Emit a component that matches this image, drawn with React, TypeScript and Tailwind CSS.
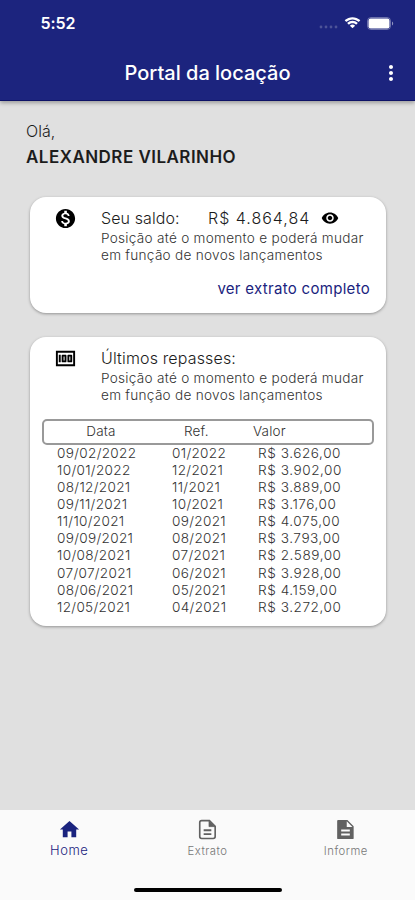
import type { ReactNode } from 'react';
import { MdHome, MdMoney, MdMonetizationOn, MdMoreVert, MdVisibility } from 'react-icons/md';

const repasses = [
  { data: '09/02/2022', ref: '01/2022', valor: 'R$ 3.626,00' },
  { data: '10/01/2022', ref: '12/2021', valor: 'R$ 3.902,00' },
  { data: '08/12/2021', ref: '11/2021', valor: 'R$ 3.889,00' },
  { data: '09/11/2021', ref: '10/2021', valor: 'R$ 3.176,00' },
  { data: '11/10/2021', ref: '09/2021', valor: 'R$ 4.075,00' },
  { data: '09/09/2021', ref: '08/2021', valor: 'R$ 3.793,00' },
  { data: '10/08/2021', ref: '07/2021', valor: 'R$ 2.589,00' },
  { data: '07/07/2021', ref: '06/2021', valor: 'R$ 3.928,00' },
  { data: '08/06/2021', ref: '05/2021', valor: 'R$ 4.159,00' },
  { data: '12/05/2021', ref: '04/2021', valor: 'R$ 3.272,00' },
];

function StatusBar() {
  return (
    <div className="flex h-[46px] items-center pl-[40.5px] pr-[21px]">
      <span className="text-[16px] font-semibold leading-none tracking-[-0.1px]">5:52</span>
      <div className="ml-auto flex items-center">
        <svg viewBox="0 0 19 4" className="mt-2 h-1 w-[19px]" fill="#4d5398">
          <circle cx="2" cy="2" r="1.4" />
          <circle cx="7" cy="2" r="1.4" />
          <circle cx="12" cy="2" r="1.4" />
          <circle cx="17" cy="2" r="1.4" />
        </svg>
        <svg viewBox="0 0 17 12" className="ml-[6px] h-3 w-[17px]" fill="white">
          <path d="M8.5 2.4c2.3 0 4.4.9 6 2.4.1.1.3.1.4 0l1.2-1.2c.1-.1.1-.3 0-.5C12-.8 5-.8.9 3.1c-.1.2-.1.4 0 .5l1.2 1.2c.1.1.3.1.4 0C4.1 3.3 6.2 2.4 8.5 2.4z" />
          <path d="M8.5 6.2c1.3 0 2.5.5 3.4 1.3.1.1.3.1.5 0l1.2-1.2c.1-.1.1-.3 0-.5a7.5 7.5 0 0 0-10.2 0c-.1.2-.1.4 0 .5l1.2 1.2c.2.1.4.1.5 0 .9-.8 2.1-1.3 3.4-1.3z" />
          <path d="M10.9 8.9c.1-.1.1-.3 0-.4a3.7 3.7 0 0 0-4.8 0c-.1.1-.1.3 0 .4l2.2 2.2c.1.1.3.1.4 0z" />
        </svg>
        <svg viewBox="0 0 27 13" className="ml-[6px] h-[13px] w-[27px]">
          <rect x=".5" y=".5" width="23" height="12" rx="3.5" fill="none" stroke="white" strokeOpacity=".35" />
          <rect x="1.5" y="1.5" width="21" height="10" rx="2.2" fill="white" />
          <path d="M25 4.5c1.6.6 1.6 3.4 0 4z" fill="white" fillOpacity=".5" />
        </svg>
      </div>
    </div>
  );
}

function Card({ className, children }: { className: string; children: ReactNode }) {
  return (
    <section className={`ml-[29.5px] mr-[29px] rounded-[16px] bg-white shadow-[0_1px_3px_rgba(0,0,0,0.35)] ${className}`}>
      {children}
    </section>
  );
}

function Aviso() {
  return (
    <p className="whitespace-nowrap text-[13.6px] font-light leading-[17px] tracking-[0.27px] text-[#333]">
      Posição até o momento e poderá mudar
      <br />
      em função de novos lançamentos
    </p>
  );
}

function PageOutlineIcon() {
  return (
    <svg viewBox="0 0 24 24" className="size-[23px]" fill="none" stroke="currentColor" strokeWidth="1.7">
      <path d="M14 2.800H5.900a2 2 0 0 0-2 2v14.600a2 2 0 0 0 2 2H18a2 2 0 0 0 2-2V8.800z" />
      <path d="M13.500 3v6h6.200z" fill="currentColor" strokeWidth=".6" />
      <path d="M8 12.700h8M8 16.800h8" strokeWidth="2" />
    </svg>
  );
}

function PageIcon() {
  return (
    <svg viewBox="0 0 24 24" className="size-[23px]" fill="currentColor">
      <path
        fillRule="evenodd"
        d="M4.300 2H14l6.500 6.500v13a.5.500 0 0 1-.5.500H4.300a1 1 0 0 1-1-1V3a1 1 0 0 1 1-1zM13.300 3.500V9.300h5.900zM7.500 12v2h9v-2zM7.500 16.200v2h9v-2z"
      />
    </svg>
  );
}

function NavItem({ icon, label, active }: { icon: ReactNode; label: string; active?: boolean }) {
  return (
    <div className={active ? 'flex flex-1 flex-col items-center text-[#1a237e]' : 'flex flex-1 flex-col items-center text-[#616161]'}>
      {icon}
      <span
        className={
          active
            ? 'mt-px text-[13px] font-light leading-[17px] tracking-[0.55px]'
            : 'mt-[2px] text-[11.3px] font-light leading-[17px] tracking-[0.5px] text-[#777]'
        }
      >
        {label}
      </span>
    </div>
  );
}

export default function App() {
  return (
    <div className="flex h-[900px] w-[415px] flex-col bg-[#e0e0e0] font-['Inter','Liberation_Sans',sans-serif] text-[#1c1c1c]">
      <header className="h-[101px] shrink-0 border-b border-[#0d1266] bg-[#1c247e] text-white shadow-[0_2px_4px_rgba(0,0,0,0.3)]">
        <StatusBar />
        <div className="grid grid-cols-[40px_1fr_40px] items-center pt-[11px]">
          <span />
          <h1 className="whitespace-nowrap text-center text-[20px] font-medium leading-8">Portal da locação</h1>
          <MdMoreVert className="ml-1 size-6" />
        </div>
      </header>

      <main className="flex-1">
        <div className="px-[26px] pt-[19px]">
          <p className="text-[16px] font-light leading-[22px]">Olá,</p>
          <p className="mt-[4px] text-[17px] font-semibold leading-[22px] tracking-[0.47px]">ALEXANDRE VILARINHO</p>
        </div>

        <Card className="mt-[28.5px] flex h-[116.5px] pl-[24px] pt-[10px]">
          <MdMonetizationOn className="size-[23px] shrink-0 text-black" />
          <div className="ml-[24.5px] flex-1">
            <div className="flex h-[23px] items-center whitespace-nowrap text-[16px] font-light">
              <span className="w-[107px] tracking-[0.1px]">Seu saldo:</span>
              <span className="w-[113px] tracking-[1px]">R$ 4.864,84</span>
              <MdVisibility className="size-[18px] text-black" />
            </div>
            <Aviso />
            <p className="mr-[16px] mt-[15px] whitespace-nowrap text-right text-[15px] leading-[20px] tracking-[0.3px] text-[#1a237e]">
              ver extrato completo
            </p>
          </div>
        </Card>

        <Card className="mt-[23.5px] h-[289.5px] pt-[10px]">
          <div className="flex pl-[24px]">
            <MdMoney className="size-[23px] shrink-0 text-black" />
            <div className="ml-[24.5px]">
              <h2 className="h-[23px] text-[16px] font-light leading-[23px] tracking-[0.15px]">Últimos repasses:</h2>
              <Aviso />
            </div>
          </div>
          <div className="ml-[12.5px] mt-[15px] flex h-[26px] w-[332px] items-center rounded-[5px] border-2 border-[#999] text-[13.5px] font-light tracking-[0.2px] text-[#333]">
            <span className="w-[114px] text-center">Data</span>
            <span className="ml-[26px] w-[69px]">Ref.</span>
            <span>Valor</span>
          </div>
          {repasses.map((r) => (
            <div
              key={r.data}
              className="flex h-[17.1px] items-center whitespace-nowrap pl-[27.5px] text-[13.6px] font-light text-[#333]"
            >
              <span className="w-[115px] tracking-[0.32px]">{r.data}</span>
              <span className="w-[86px] tracking-[0.32px]">{r.ref}</span>
              <span className="tracking-[0.55px]">{r.valor}</span>
            </div>
          ))}
        </Card>
      </main>

      <nav className="flex h-[90px] shrink-0 flex-col bg-[#fafafa]">
        <div className="flex pt-[8px]">
          <NavItem active label="Home" icon={<MdHome className="size-[23px]" />} />
          <NavItem label="Extrato" icon={<PageOutlineIcon />} />
          <NavItem label="Informe" icon={<PageIcon />} />
        </div>
        {/* home indicator */}
        <div className="mb-[8px] mt-auto h-[4px] w-[148px] self-center rounded-full bg-black" />
      </nav>
    </div>
  );
}
